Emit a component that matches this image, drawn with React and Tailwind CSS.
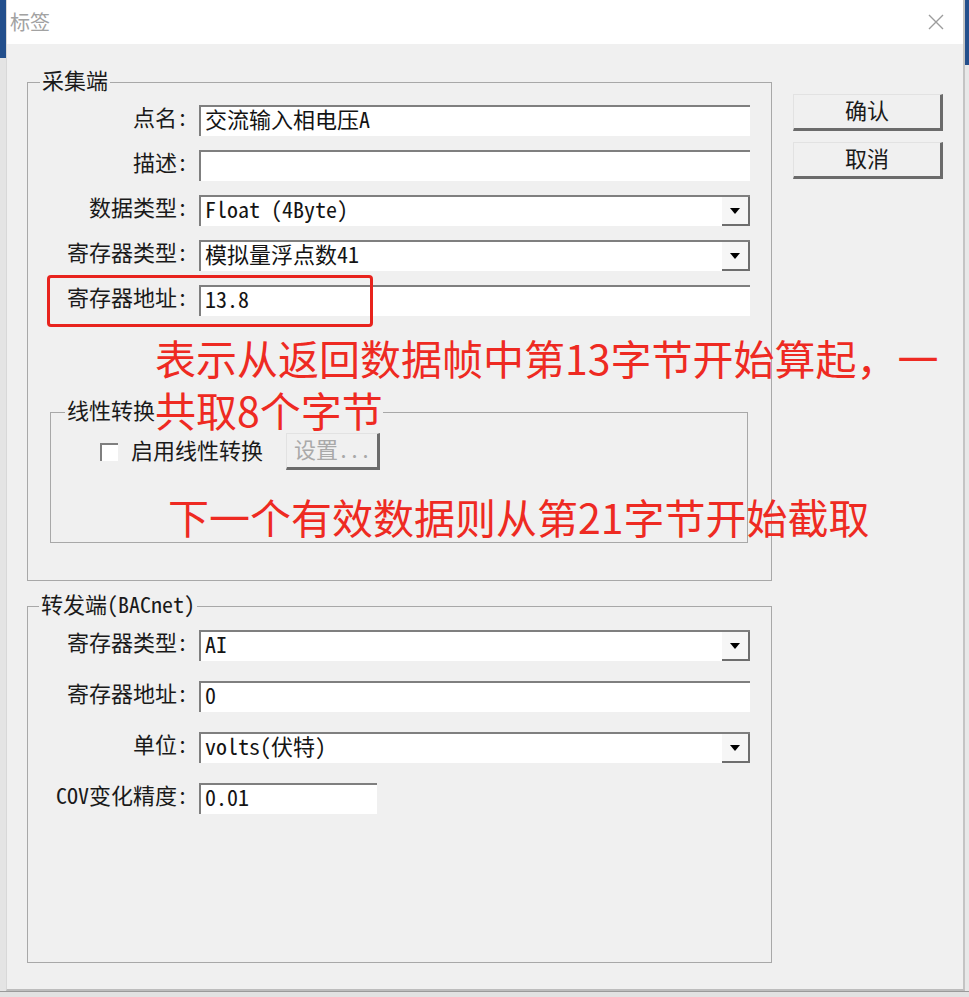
import React from 'react';

const ui = "font-['Noto_Sans_Mono_CJK_SC','Liberation_Mono','Noto_Sans_CJK_SC',monospace]";
const note = "font-['Noto_Sans_CJK_SC',sans-serif] text-[41px] leading-[34px] text-[#ee2a22] whitespace-nowrap";

const Arrow = () => (
  <svg width="10" height="6" viewBox="0 0 10 6">
    <path d="M0 0h10L5 6z" fill="#000" />
  </svg>
);

const TextBox = ({ value, wide = true }) => (
  <div
    className={`${wide ? 'w-[551px]' : 'w-[178px]'} h-[31px] bg-white border-t-2 border-l-2 border-[#7f7f7f] flex items-center pl-[4px] pb-[8px] text-[22px] leading-none text-[#141414]`}
  >
    {value}
  </div>
);

const Combo = ({ value }) => (
  <div className="w-[551px] h-[31px] bg-white border-t-2 border-l-2 border-[#7f7f7f] flex">
    <div className="flex-1 flex items-center pl-[4px] pb-[8px] text-[22px] leading-none text-[#141414]">{value}</div>
    <div className="w-[28px] bg-[#f6f6f6] border-r-2 border-b-2 border-[#6e6e6e] flex items-center justify-center">
      <Arrow />
    </div>
  </div>
);

const Row = ({ label, children }) => (
  <div className="flex items-center">
    <div className="w-[160px] pb-[9px] text-right text-[22px] leading-none text-[#1a1a1a] whitespace-nowrap">{label}</div>
    <div className="ml-[11px]">{children}</div>
  </div>
);

const Button = ({ children }) => (
  <div className="w-[150px] h-[37px] pb-[5px] bg-[#f0f0f0] border-t border-l border-t-[#e2e2e2] border-l-[#e2e2e2] border-r-[3px] border-b-[3px] border-r-[#6b6b6b] border-b-[#6b6b6b] flex items-center justify-center text-[22px] leading-none text-[#1a1a1a]">
    {children}
  </div>
);

export default function App() {
  return (
    <div className={`w-[969px] h-[997px] relative overflow-hidden bg-[#dcdcdc] flex flex-col ${ui}`}>
      <div className="flex flex-1">
        {/* window behind, left edge */}
        <div className="w-[6px] flex flex-col">
          <div className="h-[58px] bg-[#234f8c]" />
          <div className="flex-1 bg-[#e4e4e4]" />
        </div>

        {/* dialog */}
        <div className="w-[959px] flex flex-col border-l border-r-2 border-b-2 border-l-[#d8d8d8] border-r-[#c4c4c4] border-b-[#bdbdbd]">
          <div className="h-[44px] bg-white flex items-center justify-between pl-[3px] pr-[19px]">
            <span className="text-[20px] leading-none text-[#a2a2a2] font-['Noto_Sans_CJK_SC',sans-serif]">标签</span>
            <svg width="16" height="16" viewBox="0 0 16 16">
              <path d="M1 1L15 15M15 1L1 15" stroke="#9c9c9c" strokeWidth="1.4" />
            </svg>
          </div>

          <div className="flex-1 bg-[#f0f0f0] flex pl-[20px] pt-[26px]">
            <div className="w-[745px] flex flex-col">
              {/* 采集端 */}
              <fieldset className="border border-[#a8a8a8] pb-[37px]">
                <legend className="ml-[12px] px-[2px] pb-[6px] text-[22px] leading-[18px] text-[#1a1a1a]">采集端</legend>
                <div className="pt-[11px] flex flex-col gap-[14px]">
                  <Row label="点名:"><TextBox value="交流输入相电压A" /></Row>
                  <Row label="描述:"><TextBox value="" /></Row>
                  <Row label="数据类型:"><Combo value="Float (4Byte)" /></Row>
                  <Row label="寄存器类型:"><Combo value="模拟量浮点数41" /></Row>
                  <Row label="寄存器地址:"><TextBox value="13.8" /></Row>
                </div>

                <fieldset className="ml-[22px] w-[698px] mt-[84px] border border-[#a8a8a8] pb-[72px]">
                  <legend className="ml-[14px] px-[2px] pb-[6px] text-[22px] leading-[18px] text-[#1a1a1a]">线性转换</legend>
                  <div className="mt-[9px] h-[37px] flex items-center">
                    <div className="ml-[49px] w-[18px] h-[18px] bg-white border-t-2 border-l-2 border-[#7f7f7f]" />
                    <span className="ml-[13px] pb-[6px] text-[22px] leading-none text-[#1a1a1a]">启用线性转换</span>
                    <div className="ml-[23px] w-[94px] h-[37px] pb-[6px] border-t border-l border-t-[#e2e2e2] border-l-[#e2e2e2] border-r-[3px] border-b-[3px] border-r-[#6b6b6b] border-b-[#6b6b6b] flex items-center pl-[7px] text-[22px] leading-none text-[#a9a9a9]">
                      设置...
                    </div>
                  </div>
                </fieldset>
              </fieldset>

              {/* 转发端 */}
              <fieldset className="mt-[13px] border border-[#a8a8a8] pb-[148px]">
                <legend className="ml-[11px] px-[2px] pb-[6px] text-[22px] leading-[18px] text-[#1a1a1a]">转发端(BACnet)</legend>
                <div className="pt-[12px] flex flex-col gap-[20px]">
                  <Row label="寄存器类型:"><Combo value="AI" /></Row>
                  <Row label="寄存器地址:"><TextBox value="0" /></Row>
                  <Row label="单位:"><Combo value="volts(伏特)" /></Row>
                  <Row label="COV变化精度:"><TextBox value="0.01" wide={false} /></Row>
                </div>
              </fieldset>
            </div>

            <div className="ml-[21px] pt-[24px] flex flex-col gap-[11px]">
              <Button>确认</Button>
              <Button>取消</Button>
            </div>
          </div>
        </div>

        {/* window behind, right edge */}
        <div className="w-[4px] flex flex-col">
          <div className="h-[65px] bg-[#234f8c]" />
          <div className="flex-1 bg-[#e8e8e8]" />
        </div>
      </div>
      <div className="h-[6px] bg-[#e2e2e2] border-t border-[#9a9a9a]" />

      {/* red annotations drawn over the screenshot */}
      <div className="absolute left-[47px] top-[275px] w-[326px] h-[52px] border-[3px] border-[#e8231d] rounded-[4px]" />
      <div className={`absolute left-[155px] top-[340px] ${note}`}>表示从返回数据帧中第13字节开始算起，一</div>
      <div className={`absolute left-[155px] top-[392px] bg-[#f0f0f0] ${note}`}>共取8个字节</div>
      <div className={`absolute left-[168px] top-[499px] ${note}`}>下一个有效数据则从第21字节开始截取</div>
    </div>
  );
}
